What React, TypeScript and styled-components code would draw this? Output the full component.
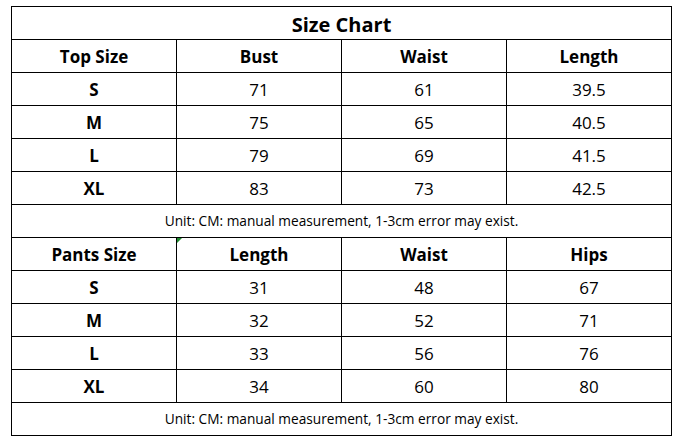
import React from "react";
import styled, { createGlobalStyle } from "styled-components";

const GlobalStyle = createGlobalStyle`
  html, body {
    margin: 0;
    padding: 0;
    background: #ffffff;
  }
  body {
    font-family: "Open Sans", "Liberation Sans", sans-serif;
    color: #000;
  }
`;

const topRows = [
  ["S", "71", "61", "39.5"],
  ["M", "75", "65", "40.5"],
  ["L", "79", "69", "41.5"],
  ["XL", "83", "73", "42.5"],
];

const pantsRows = [
  ["S", "31", "48", "67"],
  ["M", "32", "52", "71"],
  ["L", "33", "56", "76"],
  ["XL", "34", "60", "80"],
];

const note = "Unit: CM: manual measurement, 1-3cm error may exist.";

const App = () => {
  return (
    <Page>
      <GlobalStyle />
      <Chart>
        <tbody>
          <tr>
            <Title colSpan={4}>Size Chart</Title>
          </tr>
          <tr>
            <Head>Top Size</Head>
            <Head>Bust</Head>
            <Head>Waist</Head>
            <Head>Length</Head>
          </tr>
          {topRows.map((row) => (
            <tr key={"t" + row[0]}>
              <Head>{row[0]}</Head>
              <Cell>{row[1]}</Cell>
              <Cell>{row[2]}</Cell>
              <Cell>{row[3]}</Cell>
            </tr>
          ))}
          <tr>
            <Note colSpan={4}>{note}</Note>
          </tr>
          <tr>
            <Head>Pants Size</Head>
            <Head $marked>
              Length
              <Marker />
            </Head>
            <Head>Waist</Head>
            <Head>Hips</Head>
          </tr>
          {pantsRows.map((row) => (
            <tr key={"p" + row[0]}>
              <Head>{row[0]}</Head>
              <Cell>{row[1]}</Cell>
              <Cell>{row[2]}</Cell>
              <Cell>{row[3]}</Cell>
            </tr>
          ))}
          <tr>
            <Note colSpan={4}>{note}</Note>
          </tr>
        </tbody>
      </Chart>
    </Page>
  );
};

const Page = styled.div`
  width: 688px;
  height: 442px;
  padding: 6px 0 0 11px;
  box-sizing: border-box;
  background: #fff;
`;

const Chart = styled.table`
  border-collapse: collapse;
  table-layout: fixed;
  width: 661px;
  border: 1px solid #000;
`;

const BaseCell = styled.td`
  border: 1px solid #000;
  height: 32px;
  padding: 0;
  text-align: center;
  vertical-align: middle;
  line-height: 1;
  width: 165px;
`;

const Title = styled(BaseCell)`
  font-size: 20px;
  font-weight: 700;
  padding-top: 3px;
  height: 29px;
`;

const Head = styled(BaseCell)<{ $marked?: boolean }>`
  font-size: 17px;
  font-weight: 700;
  position: ${({ $marked }) => ($marked ? "relative" : "static")};
`;

const Cell = styled(BaseCell)`
  font-size: 17px;
  font-weight: 400;
`;

const Note = styled(BaseCell)`
  font-size: 13.7px;
  font-weight: 400;
`;

const Marker = styled.span`
  position: absolute;
  left: 0;
  top: 0;
  width: 0;
  height: 0;
  border-top: 5px solid #1e8a2e;
  border-right: 5px solid transparent;
`;

export default App;
